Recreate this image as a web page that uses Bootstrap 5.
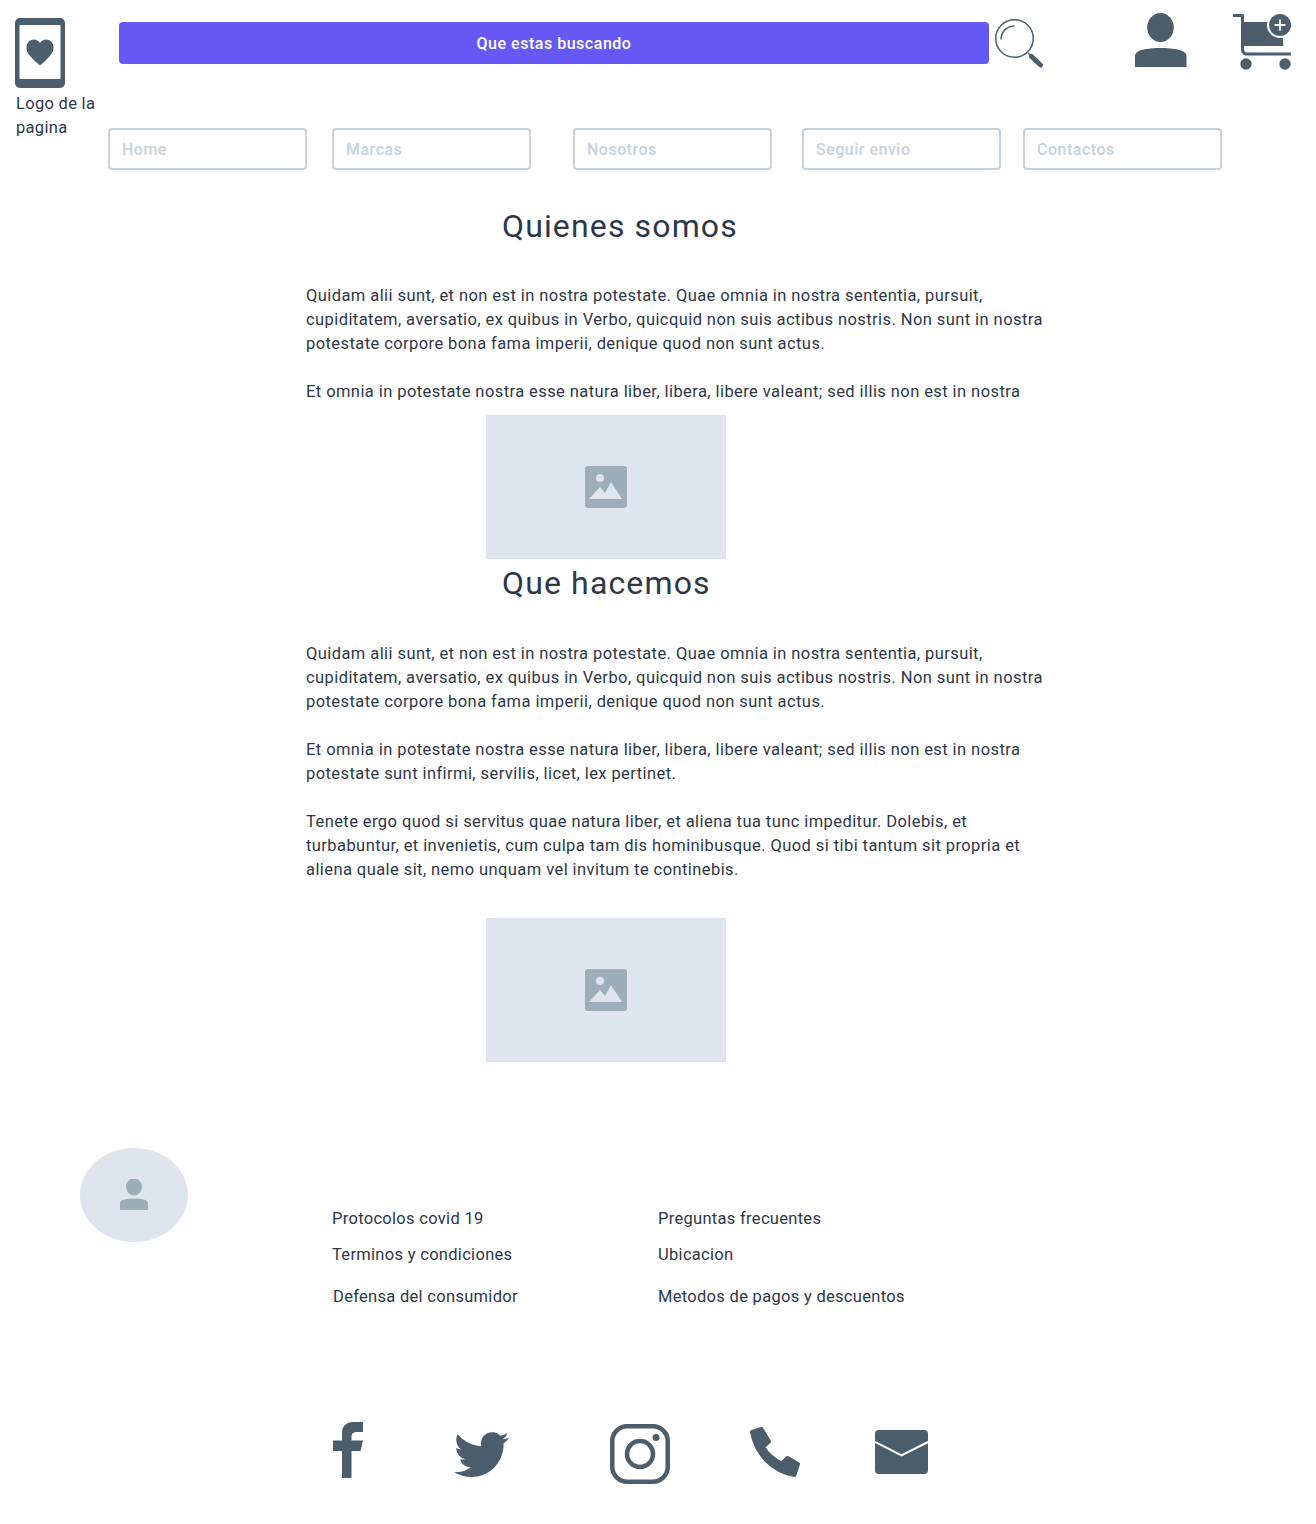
<!doctype html>
<html lang="es">
<head>
<meta charset="utf-8">
<title>Quienes somos</title>
<link href="https://cdn.jsdelivr.net/npm/bootstrap@5.3.0/dist/css/bootstrap.min.css" rel="stylesheet">
<style>
body{font-family:Roboto,"Liberation Sans",sans-serif;font-size:16.5px;line-height:24px;color:#2d3748;background:#fff;letter-spacing:.3px}
.page-wrap{width:1316px;height:1524px;overflow:hidden}
svg{display:block;flex:none}
.ico{fill:#4c5d6c}
.logo-col{width:108px;padding:18px 0 0 15px;flex:none}
.logo-text{margin:4px 0 0 1px;width:90px}
.top-row{height:128px}
.search-btn{margin:22px 0 0 11px;width:870px;height:42px;background:#6558f5;border:0;border-radius:4px;color:#fff;font-weight:500;font-size:16px;line-height:44px;padding:0;letter-spacing:.52px}
.mag-ico{margin:19px 0 0 5px}
.user-ico{margin:13px 0 0 91px}
.cart-ico{margin:14px 0 0 46px}
.nav-box{width:199px;height:42px;border:2px solid #c6d2dc;border-radius:4px;color:#c6d2dc;font-size:16px;font-weight:500;line-height:40px;padding-left:12px;text-decoration:none;display:block;flex:none;letter-spacing:.5px}
.nb2{margin-left:25px}.nb3{margin-left:42px}.nb4{margin-left:30px}.nb5{margin-left:22px}
.content-col{margin:37px 0 0 306px;width:760px}
.sec-title{font-size:32px;line-height:38px;font-weight:400;margin:0 0 39px 196px;letter-spacing:1.14px;color:#2d3748}
.sec-title.second{margin-top:5px;margin-bottom:40px}
.para{margin:0;letter-spacing:.42px}
.para+.para{margin-top:24px}
.pic{width:240px;height:144px;margin:11px 0 0 180px;background:#dfe5ee;display:flex;align-items:center;justify-content:center}
.pic.last{margin-top:36px}
.foot{margin-top:86px;margin-left:80px}
.avatar{width:108px;height:94px;border-radius:50%;background:#dfe5ee;display:flex;align-items:center;justify-content:center;flex:none}
.foot-links{margin:59px 0 0 144px}
.foot-row{height:24px}
.foot-row+.foot-row{margin-top:12px}
.foot-row.r3{margin-top:18px}
.lk-a{width:326px;flex:none}
.lk-a.shift{padding-left:1px}
.social{margin:113px 0 0 333px}
.soc-tw{margin-left:91px}.soc-ig{margin-left:100px}.soc-ph{margin-left:79px}.soc-ma{margin-left:74px}
</style>
</head>
<body>
<div class="page-wrap">
  <header class="d-flex">
    <div class="logo-col">
      <svg width="50" height="70" viewBox="0 0 50 70" class="ico" aria-hidden="true">
        <path fill-rule="evenodd" d="M5 0h40a5 5 0 0 1 5 5v60a5 5 0 0 1-5 5H5a5 5 0 0 1-5-5V5a5 5 0 0 1 5-5zM5.500 7a1 1 0 0 0-1 1v52a1 1 0 0 0 1 1h39a1 1 0 0 0 1-1V8a1 1 0 0 0-1-1z"/>
        <path d="M25 47C16 39 11.500 35 11.500 29c0-4.500 3.300-8 7.500-8 2.500 0 4.600 1.200 6 3.500 1.400-2.300 3.500-3.500 6-3.500 4.200 0 7.500 3.500 7.500 8 0 6-4.500 10-13.500 18z" transform="translate(0 .5)"/>
      </svg>
      <div class="logo-text">Logo de la pagina</div>
    </div>
    <div class="flex-grow-1">
      <div class="d-flex top-row">
        <button type="button" class="btn search-btn">Que estas buscando</button>
        <svg class="mag-ico" width="50" height="50" viewBox="0 0 50 50" aria-hidden="true">
          <circle cx="20.500" cy="19.500" r="18.800" fill="none" stroke="#4c5d6c" stroke-width="1.500"/>
          <path d="M7 20C7.500 12.500 12.500 7.500 20 7" fill="none" stroke="#4c5d6c" stroke-width="1.500" stroke-linecap="round"/>
          <path d="M34 34l3 3" stroke="#4c5d6c" stroke-width="1.500"/>
          <path d="M37.500 37.500l9 8.500" stroke="#4c5d6c" stroke-width="5" stroke-linecap="round"/>
        </svg>
        <svg class="user-ico ico" width="52" height="54" viewBox="0 0 52 54" aria-hidden="true">
          <ellipse cx="25.500" cy="14.500" rx="13.300" ry="14.500"/>
          <path d="M0 54V43C0 37 12 35 25.500 35S51.500 37 51.500 43V54z"/>
        </svg>
        <svg class="cart-ico ico" width="58" height="56" viewBox="0 0 58 56" aria-hidden="true">
          <path d="M0 0h10.500v3H0z"/>
          <path d="M8 1h3v34c0 2 1 3.500 3 3.500h44v3H14c-4 0-6-2.500-6-6z"/>
          <path d="M10 8h38l2.500 24H11z"/>
          <circle cx="13" cy="50" r="5.700"/>
          <circle cx="52" cy="50" r="5.700"/>
          <circle cx="47" cy="11" r="13" fill="#fff"/>
          <circle cx="47" cy="11" r="11"/>
          <path d="M47 5.500v11M41.500 11h11" stroke="#fff" stroke-width="1.800"/>
        </svg>
      </div>
      <nav class="d-flex">
        <a href="#" class="nav-box">Home</a>
        <a href="#" class="nav-box nb2">Marcas</a>
        <a href="#" class="nav-box nb3">Nosotros</a>
        <a href="#" class="nav-box nb4">Seguir envio</a>
        <a href="#" class="nav-box nb5">Contactos</a>
      </nav>
    </div>
  </header>
  <main class="content-col">
    <h1 class="sec-title">Quienes somos</h1>
    <p class="para">Quidam alii sunt, et non est in nostra potestate. Quae omnia in nostra sententia, pursuit,<br>cupiditatem, aversatio, ex quibus in Verbo, quicquid non suis actibus nostris. Non sunt in nostra<br>potestate corpore bona fama imperii, denique quod non sunt actus.</p>
    <p class="para">Et omnia in potestate nostra esse natura liber, libera, libere valeant; sed illis non est in nostra</p>
    <div class="pic">
      <svg width="42" height="42" viewBox="0 0 42 42" aria-hidden="true"><rect width="42" height="42" rx="3" fill="#9dadba"/><circle cx="15" cy="12" r="4" fill="#dfe5ee"/><path d="M4 33L15 21 20 27 26 16 37 33z" fill="#dfe5ee"/></svg>
    </div>
    <h2 class="sec-title second">Que hacemos</h2>
    <p class="para">Quidam alii sunt, et non est in nostra potestate. Quae omnia in nostra sententia, pursuit,<br>cupiditatem, aversatio, ex quibus in Verbo, quicquid non suis actibus nostris. Non sunt in nostra<br>potestate corpore bona fama imperii, denique quod non sunt actus.</p>
    <p class="para">Et omnia in potestate nostra esse natura liber, libera, libere valeant; sed illis non est in nostra<br>potestate sunt infirmi, servilis, licet, lex pertinet.</p>
    <p class="para">Tenete ergo quod si servitus quae natura liber, et aliena tua tunc impeditur. Dolebis, et<br>turbabuntur, et invenietis, cum culpa tam dis hominibusque. Quod si tibi tantum sit propria et<br>aliena quale sit, nemo unquam vel invitum te continebis.</p>
    <div class="pic last">
      <svg width="42" height="42" viewBox="0 0 42 42" aria-hidden="true"><rect width="42" height="42" rx="3" fill="#9dadba"/><circle cx="15" cy="12" r="4" fill="#dfe5ee"/><path d="M4 33L15 21 20 27 26 16 37 33z" fill="#dfe5ee"/></svg>
    </div>
  </main>
  <footer>
    <div class="d-flex foot">
      <div class="avatar">
        <svg width="30" height="32" viewBox="0 0 30 32" aria-hidden="true"><ellipse cx="15" cy="8" rx="8" ry="8.500" fill="#9dadba"/><path d="M1 31V24C1 20.500 8 19.500 15 19.500S29 20.500 29 24V31z" fill="#9dadba"/></svg>
      </div>
      <div class="foot-links">
        <div class="d-flex foot-row"><div class="lk-a">Protocolos covid 19</div><div>Preguntas frecuentes</div></div>
        <div class="d-flex foot-row"><div class="lk-a">Terminos y condiciones</div><div>Ubicacion</div></div>
        <div class="d-flex foot-row r3"><div class="lk-a shift">Defensa del consumidor</div><div>Metodos de pagos y descuentos</div></div>
      </div>
    </div>
    <div class="d-flex social">
      <svg width="30" height="62" viewBox="0 0 30 62" class="ico" aria-hidden="true"><path d="M9 56V29H0V18.500H9V11C9 4 13.500 0 20 0h10v10h-6c-3.500 0-5.500 1.500-5.500 5v3.500H30L27.500 29H18.500V56z"/></svg>
      <svg class="soc-tw ico" width="56" height="62" viewBox="0 0 56 62" aria-hidden="true"><g transform="translate(0 5) scale(2.300)"><path d="M23.953 4.570a10 10 0 01-2.825.775 4.958 4.958 0 002.163-2.723c-.951.555-2.005.959-3.127 1.184a4.920 4.920 0 00-8.384 4.482C7.690 8.095 4.067 6.130 1.640 3.162a4.822 4.822 0 00-.666 2.475c0 1.710.870 3.213 2.188 4.096a4.904 4.904 0 01-2.228-.616v.060a4.923 4.923 0 003.946 4.827 4.996 4.996 0 01-2.212.085 4.936 4.936 0 004.604 3.417 9.867 9.867 0 01-6.102 2.105c-.390 0-.779-.023-1.170-.067a13.995 13.995 0 007.557 2.209c9.053 0 13.998-7.496 13.998-13.985 0-.210 0-.420-.015-.630A9.935 9.935 0 0024 4.590z"/></g></svg>
      <svg class="soc-ig" width="60" height="62" viewBox="0 0 60 62" aria-hidden="true"><g fill="none" stroke="#4c5d6c" stroke-width="4.500"><rect x="2.250" y="4.250" width="55.500" height="55.500" rx="15"/><circle cx="30" cy="32" r="13"/></g><circle cx="46" cy="15.500" r="3.500" fill="#4c5d6c"/></svg>
      <svg class="soc-ph ico" width="52" height="62" viewBox="0 0 52 62" aria-hidden="true"><path transform="translate(0 4)" stroke="#4c5d6c" stroke-width="4" stroke-linejoin="round" d="M3 6L12.500 3 20 15.500 14 21C19 29 25 34 33 37.500L38.500 32 49 38 45.500 49C23 45 7 28 3 6z"/></svg>
      <svg class="soc-ma" width="54" height="62" viewBox="0 0 54 62" aria-hidden="true"><rect y="8" width="53" height="44" rx="4" fill="#4c5d6c"/><path d="M0 20L26.500 33.500 53 20" fill="none" stroke="#fff" stroke-width="2"/></svg>
    </div>
  </footer>
</div>
<script src="https://cdn.jsdelivr.net/npm/bootstrap@5.3.0/dist/js/bootstrap.bundle.min.js"></script>
</body>
</html>
